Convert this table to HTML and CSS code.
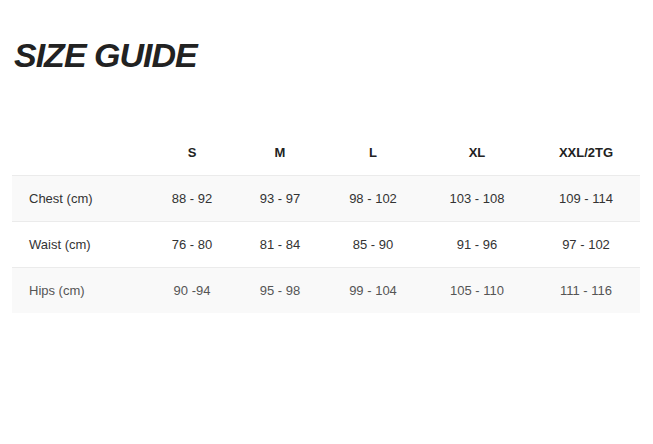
FILE: index.html
```html
<!DOCTYPE html>
<html>
<head>
<meta charset="utf-8">
<link rel="stylesheet" href="styles.css">
</head>
<body>
<div class="page">
  <h1 class="title">SIZE GUIDE</h1>
  <table class="sizes">
    <colgroup>
      <col class="c-label"><col class="c-s"><col class="c-m"><col class="c-l"><col class="c-xl"><col class="c-xxl">
    </colgroup>
    <thead>
      <tr><th></th><th>S</th><th>M</th><th>L</th><th>XL</th><th>XXL/2TG</th></tr>
    </thead>
    <tbody>
      <tr class="alt"><td class="label">Chest (cm)</td><td>88 - 92</td><td>93 - 97</td><td>98 - 102</td><td>103 - 108</td><td>109 - 114</td></tr>
      <tr><td class="label">Waist (cm)</td><td>76 - 80</td><td>81 - 84</td><td>85 - 90</td><td>91 - 96</td><td>97 - 102</td></tr>
      <tr class="alt faded"><td class="label">Hips (cm)</td><td>90 -94</td><td>95 - 98</td><td>99 - 104</td><td>105 - 110</td><td>111 - 116</td></tr>
    </tbody>
  </table>
</div>
</body>
</html>
```
FILE: styles.css
```css
html, body { margin: 0; padding: 0; background: #fff; }
body { font-family: "Liberation Sans", Arial, sans-serif; color: #333; }
.page { padding: 35px 13px 0 12px; }
.title {
  margin: 0 0 54px 2px;
  font-size: 34px;
  line-height: 40px;
  font-weight: bold;
  font-style: italic;
  letter-spacing: -1px;
  color: #222;
}
.sizes { border-collapse: collapse; table-layout: fixed; width: 628px; font-size: 13px; }
.c-label { width: 136px; }
.c-s { width: 88px; }
.c-m { width: 88px; }
.c-l { width: 98px; }
.c-xl { width: 110px; }
.c-xxl { width: 108px; }
.sizes th { height: 46px; padding: 0; font-weight: bold; color: #222; text-align: center; vertical-align: middle; }
.sizes td { height: 45px; padding: 0; text-align: center; vertical-align: middle; border-top: 1px solid #ebebeb; }
.sizes td.label { text-align: left; padding-left: 17px; }
.sizes tr.alt td { background: #f9f9f9; }
.sizes tr.faded td { color: #555; }
```
